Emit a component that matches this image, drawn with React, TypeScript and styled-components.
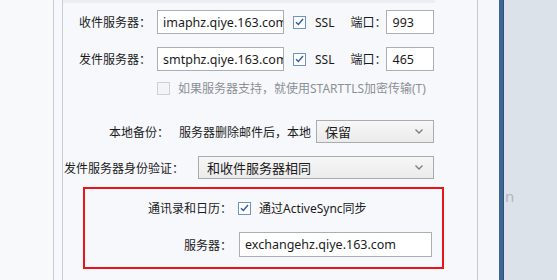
import styled, { createGlobalStyle } from "styled-components";

const GlobalStyle = createGlobalStyle`
  html, body {
    margin: 0;
    padding: 0;
    background: #f7f8fb;
  }
  body {
    font-family: "Noto Sans", "Noto Sans CJK SC", sans-serif;
    font-size: 12px;
    color: #1b1b1b;
  }
`;

const Window = styled.div`
  display: flex;
  width: 557px;
  height: 280px;
  overflow: hidden;
`;

const SideStrip = styled.div`
  width: 53px;
  flex-shrink: 0;
  background: #f8f9fb;
  border-right: 1px solid #c9ccd1;
`;

const Gutter = styled.div`
  width: 8px;
  flex-shrink: 0;
  background: #f7f8fb;
  border-right: 1px solid #c9ccd1;
`;

const Content = styled.div`
  width: 414px;
  flex-shrink: 0;
  background: #f7f8fb;
  border-right: 1px solid #c6c9ce;
  display: flex;
  flex-direction: column;
`;

const TopBand = styled.div`
  width: 372px;
  height: 3px;
  background: #eceef2;
`;

const Spacer = styled.div`
  width: 21px;
  flex-shrink: 0;
  background: #f6f7fa;
`;

const BlueBar = styled.div`
  width: 4px;
  flex-shrink: 0;
  background: #3e6593;
  border-right: 1px solid #2f5078;
`;

const RightPane = styled.div`
  flex: 1;
  background: #dce2e9;
  padding-top: 186px;
`;

const GhostText = styled.span`
  display: block;
  font-size: 15px;
  color: #aeb6c0;
  margin-left: 1px;
`;

const Row = styled.div<{ $top: number; $left: number; $height: number }>`
  display: flex;
  align-items: center;
  margin-top: ${({ $top }) => $top}px;
  padding-left: ${({ $left }) => $left}px;
  height: ${({ $height }) => $height}px;
  white-space: nowrap;
`;

const Label = styled.span<{ $width?: number; $align?: "left" | "right" }>`
  display: inline-block;
  width: ${({ $width }) => ($width ? `${$width}px` : "auto")};
  text-align: ${({ $align }) => $align ?? "left"};
  flex-shrink: 0;
`;

const Text = styled.span<{ $gap?: number; $muted?: boolean }>`
  margin-left: ${({ $gap }) => $gap ?? 0}px;
  color: ${({ $muted }) => ($muted ? "#8b9097" : "#1b1b1b")};
`;

const Input = styled.div<{ $width: number; $height: number; $gap?: number }>`
  box-sizing: border-box;
  width: ${({ $width }) => $width}px;
  height: ${({ $height }) => $height}px;
  margin-left: ${({ $gap }) => $gap ?? 0}px;
  border: 1px solid #abafb5;
  background: #ffffff;
  display: flex;
  align-items: center;
  padding-left: 5px;
  overflow: hidden;
  font-size: 12.5px;
  flex-shrink: 0;
`;

const Select = styled.div<{ $width: number; $gap?: number }>`
  box-sizing: border-box;
  width: ${({ $width }) => $width}px;
  height: 23px;
  margin-left: ${({ $gap }) => $gap ?? 0}px;
  border: 1px solid #a9abae;
  background: linear-gradient(#f7f7f7, #ebebeb);
  display: flex;
  align-items: center;
  justify-content: space-between;
  padding: 0 10px 0 8px;
  font-size: 13px;
  flex-shrink: 0;
`;

const Chevron = () => (
  <svg width="8" height="5" viewBox="0 0 8 5">
    <path d="M0.5 0.5 L4 4 L7.5 0.5" fill="none" stroke="#7a7d82" strokeWidth="1.3" />
  </svg>
);

const Box = styled.span<{ $disabled?: boolean; $gap?: number }>`
  box-sizing: border-box;
  width: 13px;
  height: 13px;
  margin-left: ${({ $gap }) => $gap ?? 0}px;
  border: 1px solid ${({ $disabled }) => ($disabled ? "#cdd0d4" : "#6f93c4")};
  background: ${({ $disabled }) => ($disabled ? "#f3f4f6" : "#ffffff")};
  display: inline-flex;
  align-items: center;
  justify-content: center;
  flex-shrink: 0;
`;

const Checkbox = ({ checked, disabled, gap }: { checked?: boolean; disabled?: boolean; gap?: number }) => (
  <Box $disabled={disabled} $gap={gap}>
    {checked ? (
      <svg width="9" height="8" viewBox="0 0 9 8">
        <path d="M1 4.2 L3.4 6.5 L8 1" fill="none" stroke="#2d63ae" strokeWidth="1.5" />
      </svg>
    ) : null}
  </Box>
);

const Highlight = styled.div`
  box-sizing: border-box;
  margin-top: 8px;
  margin-left: 20px;
  width: 361px;
  height: 82px;
  border: 2px solid #e8141d;
  display: flex;
  flex-direction: column;
`;

const ServerRow = ({ label, host, port, top }: { label: string; host: string; port: string; top: number }) => (
  <Row $top={top} $left={16} $height={24}>
    <Label $width={78}>{label}</Label>
    <Input $width={127} $height={24}>{host}</Input>
    <Checkbox checked gap={9} />
    <Text $gap={9}>SSL</Text>
    <Text $gap={16}>端口：</Text>
    <Input $width={48} $height={24} $gap={0}>{port}</Input>
  </Row>
);

export default function App() {
  return (
    <>
      <GlobalStyle />
      <Window>
        <SideStrip />
        <Gutter />
        <Content>
          <TopBand />
          <ServerRow label="收件服务器：" host="imaphz.qiye.163.com" port="993" top={7} />
          <ServerRow label="发件服务器：" host="smtphz.qiye.163.com" port="465" top={13} />
          <Row $top={10} $left={94} $height={14}>
            <Checkbox disabled />
            <Text $gap={8} $muted>如果服务器支持，就使用STARTTLS加密传输(T)</Text>
          </Row>
          <Row $top={25} $left={46} $height={23}>
            <Label>本地备份：</Label>
            <Text $gap={10}>服务器删除邮件后，本地</Text>
            <Select $width={118} $gap={5}>
              <span>保留</span>
              <Chevron />
            </Select>
          </Row>
          <Row $top={13} $left={1} $height={23}>
            <Label>发件服务器身份验证：</Label>
            <Select $width={236} $gap={14}>
              <span>和收件服务器相同</span>
              <Chevron />
            </Select>
          </Row>
          <Highlight>
            <Row $top={12} $left={0} $height={14}>
              <Label $width={147} $align="right">通讯录和日历：</Label>
              <Checkbox checked gap={6} />
              <Text $gap={8}>通过ActiveSync同步</Text>
            </Row>
            <Row $top={17} $left={0} $height={25}>
              <Label $width={147} $align="right">服务器：</Label>
              <Input $width={193} $height={25} $gap={7}>exchangehz.qiye.163.com</Input>
            </Row>
          </Highlight>
        </Content>
        <Spacer />
        <BlueBar />
        <RightPane>
          <GhostText>n</GhostText>
        </RightPane>
      </Window>
    </>
  );
}
